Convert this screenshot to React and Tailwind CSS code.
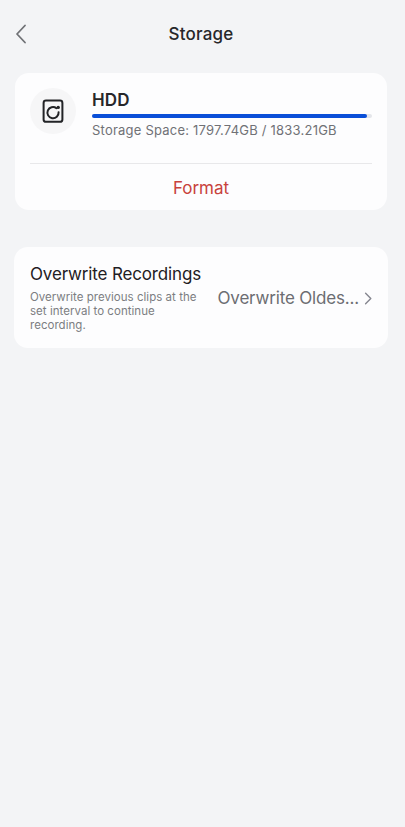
import React from 'react';

const App = () => {
  return (
    <div className="min-h-[827px] w-full bg-[#f3f4f6] font-['Inter',sans-serif]">
      {/* Header */}
      <div className="relative flex h-[68px] items-center justify-center">
        <svg className="absolute left-[15px] top-[24px]" width="12" height="20" viewBox="0 0 12 20" fill="none">
          <path d="M10 1.5 L2 10 L10 18.5" stroke="#6f7175" strokeWidth="1.8" strokeLinecap="round" strokeLinejoin="round" />
        </svg>
        <h1 className="pt-[1px] pr-[3px] text-[17px] font-medium leading-none tracking-[0.2px] text-[#27272a]">Storage</h1>
      </div>

      {/* HDD card */}
      <div className="mx-[15px] mt-[5px] flex h-[137px] w-[372px] flex-col rounded-[14px] bg-[#fdfdfe] px-[15px] pt-[15px]">
        <div className="flex h-[76px] gap-[16px] border-b border-[#e8e8ea]">
          <div className="flex h-[46px] w-[46px] shrink-0 items-center justify-center rounded-full bg-[#f6f6f7]">
            <svg width="24" height="26" viewBox="0 0 24 26" fill="none">
              <rect x="2.6" y="2.6" width="18.8" height="21.2" rx="2.4" stroke="#222326" strokeWidth="2" />
              <path d="M15.4 10.2 A5.6 5.6 0 1 0 17.6 14.2" stroke="#222326" strokeWidth="2" strokeLinecap="round" />
              <circle cx="17.2" cy="9.4" r="1.7" fill="#222326" />
            </svg>
          </div>
          <div className="flex min-w-0 flex-1 flex-col">
            <div className="mt-[2px] text-[17px] font-semibold leading-[20px] tracking-[0.1px] text-[#27272a]">HDD</div>
            <div className="mt-[4px] h-[4px] w-full rounded-full bg-[#e4e6ea]">
              <div className="h-[4px] rounded-full bg-[#0a4fd8]" style={{ width: `${(1797.74 / 1833.21) * 100}%` }} />
            </div>
            <div className="mt-[4px] whitespace-nowrap text-[13px] leading-[16px] tracking-[0.22px] text-[#707176]">
              Storage Space: 1797.74GB / 1833.21GB
            </div>
          </div>
        </div>
        <div className="flex flex-1 items-center justify-center pt-[2px] text-[17px] leading-none text-[#c8423c]">Format</div>
      </div>

      {/* Overwrite card */}
      <div className="mx-[14px] mt-[37px] flex h-[101px] w-[374px] items-center rounded-[14px] bg-[#fdfdfe] pl-[16px] pr-[15px]">
        <div className="w-[172px] shrink-0">
          <div className="whitespace-nowrap text-[17px] leading-[20px] tracking-[-0.15px] text-[#1f2023]">Overwrite Recordings</div>
          <p className="mt-[6px] text-[11.5px] leading-[14px] tracking-[0.03px] text-[#7c7d82]">
            Overwrite previous clips at the set interval to continue recording.
          </p>
        </div>
        <div className="ml-auto flex items-center gap-[5px] pt-[2px]">
          <span className="whitespace-nowrap text-[17px] leading-none tracking-[-0.17px] text-[#6c6d72]">Overwrite Oldes...</span>
          <svg width="9" height="13" viewBox="0 0 9 13" fill="none">
            <path d="M1.6 1.2 L6.8 6.5 L1.6 11.8" stroke="#85868f" strokeWidth="1.4" strokeLinecap="round" strokeLinejoin="round" />
          </svg>
        </div>
      </div>
    </div>
  );
};

export default App;
